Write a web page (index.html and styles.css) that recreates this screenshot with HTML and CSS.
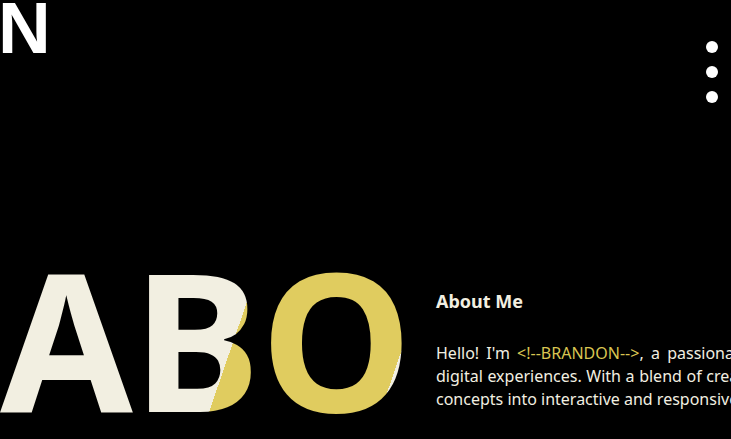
FILE: index.html
```html
<!DOCTYPE html>
<html lang="en">
<head>
<meta charset="utf-8">
<title>About</title>
<link rel="stylesheet" href="styles.css">
</head>
<body>
<header class="top">
  <div class="logo">N</div>
  <button class="menu" aria-label="Menu"><span></span><span></span><span></span></button>
</header>
<section class="about">
  <div class="big">ABO</div>
  <div class="info">
    <h2>About Me</h2>
    <p>Hello! I'm <span class="hl">&lt;!--BRANDON--&gt;</span>, a passionate web developer crafting digital experiences. With a blend of creativity and skill, I transform concepts into interactive and responsive websites.</p>
  </div>
</section>
</body>
</html>
```
FILE: styles.css
```css
html, body {
  margin: 0;
  padding: 0;
  background: #000;
  overflow: hidden;
  width: 731px;
  height: 439px;
}
body {
  font-family: "Noto Sans", "Open Sans", sans-serif;
  color: #f2efe1;
}
.top {
  height: 110px;
  display: flex;
  justify-content: space-between;
  align-items: flex-start;
}
.logo {
  font-family: "Liberation Sans", Arial, sans-serif;
  font-size: 73px;
  font-weight: 700;
  line-height: 73px;
  color: #fff;
  margin-top: -9px;
  margin-left: -2px;
}
.menu {
  margin: 41px 13px 0 0;
  padding: 0;
  border: 0;
  background: none;
  display: flex;
  flex-direction: column;
  gap: 13px;
}
.menu span {
  display: block;
  width: 12px;
  height: 12px;
  border-radius: 50%;
  background: #fff;
}
.about {
  display: flex;
  align-items: flex-start;
  gap: 26px;
  padding-top: 132px;
}
.big {
  flex: 0 0 410px;
  width: 410px;
  height: 192px;
  font-size: 192px;
  font-weight: 700;
  line-height: 192px;
  white-space: nowrap;
  background: linear-gradient(109deg, #f2efe1 253px, #e0cc5f 253px, #e0cc5f 415px, #f2efe1 415px);
  -webkit-background-clip: text;
  background-clip: text;
  color: transparent;
}
.info {
  flex: 0 0 499px;
  width: 499px;
  padding-top: 48px;
}
.info h2 {
  margin: 0;
  font-size: 18px;
  font-weight: 700;
  line-height: 23.4px;
}
.info p {
  margin: 28.6px 0 0;
  font-size: 16px;
  line-height: 23px;
  text-align: justify;
}
.hl {
  color: #d9c552;
}
```
